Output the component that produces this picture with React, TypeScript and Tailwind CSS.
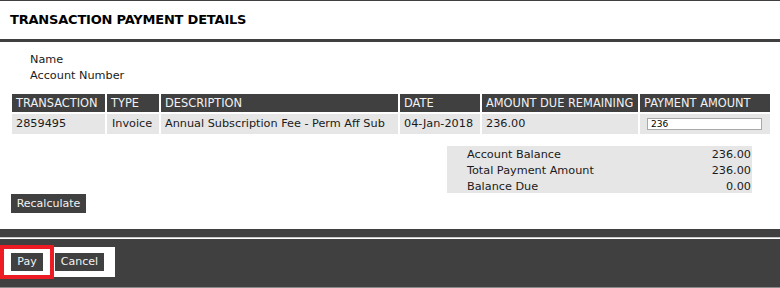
import React from "react";

const font = { fontFamily: '"DejaVu Sans", Verdana, sans-serif' };

export default function App() {
  const cols = ["TRANSACTION", "TYPE", "DESCRIPTION", "DATE", "AMOUNT DUE REMAINING", "PAYMENT AMOUNT"];
  return (
    <div className="w-[780px] h-[288px] bg-white overflow-hidden text-[#1a1a1a]" style={font}>
      <div className="h-px bg-[#404040]" />
      <div className="h-[38px] flex items-center pl-[10px] text-[13px] font-bold text-black tracking-[-0.2px]">
        TRANSACTION PAYMENT DETAILS
      </div>
      <div className="h-[3px] bg-[#404040]" />
      <div className="pt-[10px] pl-[30px] text-[11.25px] leading-[16px]">
        <div>Name</div>
        <div>Account Number</div>
      </div>
      <div className="mt-[10px] ml-[12px] grid grid-cols-[93px_52px_237px_80px_156px_130px] gap-[2px] text-[11.25px]">
        {cols.map((c) => (
          <div key={c} className="h-[18px] bg-[#404040] text-[#f2f2f2] pl-[4px] leading-[18px] whitespace-nowrap overflow-hidden text-[11.4px]">
            {c}
          </div>
        ))}
        <div className="h-[20px] bg-[#e6e6e6] pl-[4px] leading-[20px]">2859495</div>
        <div className="h-[20px] bg-[#e6e6e6] pl-[5px] leading-[20px]">Invoice</div>
        <div className="h-[20px] bg-[#e6e6e6] pl-[4px] leading-[20px] whitespace-nowrap overflow-hidden">Annual Subscription Fee - Perm Aff Sub</div>
        <div className="h-[20px] bg-[#e6e6e6] pl-[4px] leading-[20px]">04-Jan-2018</div>
        <div className="h-[20px] bg-[#e6e6e6] pl-[4px] leading-[20px]">236.00</div>
        <div className="h-[20px] bg-[#e6e6e6] pl-[7px] flex items-center">
          <input
            defaultValue="236"
            className="w-[115px] h-[12px] border border-[#a9a9a9] bg-white text-[9px] leading-[10px] px-[3px] text-black outline-none"
            style={font}
          />
        </div>
      </div>
      <div className="flex">
        <div className="ml-[447px] mt-[12px] w-[305px] h-[47px] bg-[#e6e6e6] pl-[20px] pr-px pt-[1px] text-[11.25px] leading-[16px]">
          <div className="flex justify-between"><span>Account Balance</span><span>236.00</span></div>
          <div className="flex justify-between"><span>Total Payment Amount</span><span>236.00</span></div>
          <div className="flex justify-between"><span>Balance Due</span><span>0.00</span></div>
        </div>
      </div>
      <div className="flex ml-[11px] mt-px">
        <button className="h-[19px] w-[75px] bg-[#404040] text-[#f2f2f2] text-[11px] leading-[19px] text-center" style={font}>
          Recalculate
        </button>
      </div>
      <div className="mt-[16px] h-[8px] bg-[#404040]" />
      <div className="h-px bg-[#c8c8c8]" />
      <div className="h-px bg-white" />
      <div className="h-[48px] bg-[#404040] pt-[8px] relative">
        <div className="w-[115px] h-[30px] bg-white flex items-center gap-[12px] pl-[11px]">
          <button className="h-[18px] w-[32px] bg-[#404040] text-[#f2f2f2] text-[11px] leading-[18px] text-center" style={font}>
            Pay
          </button>
          <button className="h-[18px] w-[49px] bg-[#404040] text-[#f2f2f2] text-[11px] leading-[18px] text-center" style={font}>
            Cancel
          </button>
        </div>
        <div className="absolute left-0 top-[6px] w-[54px] h-[34px] border-[4px] border-[#ed1c24]" />
      </div>
      <div className="h-px bg-[#8a8a8a]" />
    </div>
  );
}
